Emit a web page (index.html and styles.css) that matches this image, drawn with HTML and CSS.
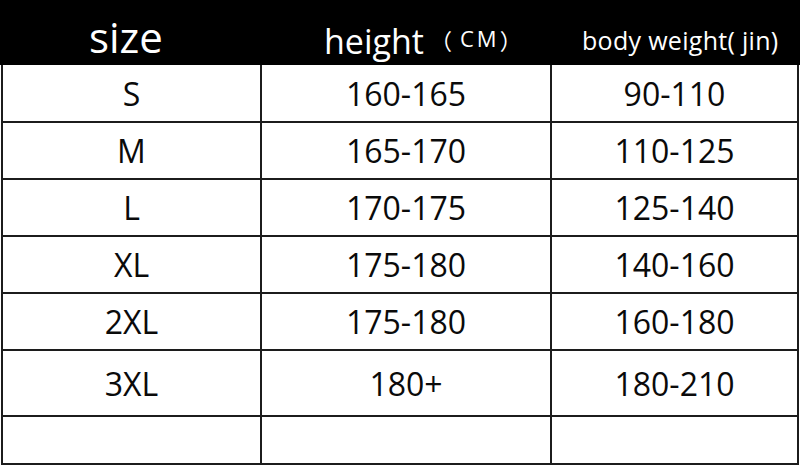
FILE: index.html
```html
<!DOCTYPE html>
<html lang="en">
<head>
<meta charset="utf-8">
<title>Size chart</title>
<link rel="stylesheet" href="styles.css">
</head>
<body>
<div class="chart">
  <div class="head">
    <div class="hcell h-size">size</div>
    <div class="hcell h-height">height<span class="unit"><span class="paren">（</span><span class="cm">CM</span><span class="paren">）</span></span></div>
    <div class="hcell h-weight">body weight( jin)</div>
  </div>
  <div class="row first"><div class="cell">S</div><div class="cell">160-165</div><div class="cell">90-110</div></div>
  <div class="row"><div class="cell">M</div><div class="cell">165-170</div><div class="cell">110-125</div></div>
  <div class="row"><div class="cell">L</div><div class="cell">170-175</div><div class="cell">125-140</div></div>
  <div class="row"><div class="cell">XL</div><div class="cell">175-180</div><div class="cell">140-160</div></div>
  <div class="row"><div class="cell">2XL</div><div class="cell">175-180</div><div class="cell">160-180</div></div>
  <div class="row tall"><div class="cell">3XL</div><div class="cell">180+</div><div class="cell">180-210</div></div>
  <div class="row empty"><div class="cell"></div><div class="cell"></div><div class="cell"></div></div>
</div>
</body>
</html>
```
FILE: styles.css
```css
html, body {
  margin: 0;
  padding: 0;
  background: #fff;
}
body {
  width: 800px;
  height: 466px;
  overflow: hidden;
  font-family: "Open Sans", "Noto Sans", "Noto Sans CJK SC", sans-serif;
  color: #000;
}
.chart {
  width: 800px;
}
.head {
  display: grid;
  grid-template-columns: 262px 290px 248px;
  height: 65px;
  background: #000;
  color: #fff;
}
.hcell {
  white-space: nowrap;
  box-sizing: border-box;
}
.h-size {
  font-size: 42px;
  line-height: 42px;
  padding-top: 16px;
  padding-left: 89px;
}
.h-height {
  font-size: 34px;
  line-height: 34px;
  padding-top: 23px;
  padding-left: 62px;
}
.unit {
  display: inline-block;
  vertical-align: 7px;
  line-height: 22px;
  margin-left: 6px;
}
.paren {
  font-family: "Noto Sans CJK SC", sans-serif;
  font-size: 22px;
  vertical-align: -2px;
}
.cm {
  font-family: "Open Sans", sans-serif;
  font-size: 22px;
  font-weight: 500;
  letter-spacing: 3px;
  margin-left: 8px;
}
.h-weight {
  font-size: 25px;
  line-height: 25px;
  padding-top: 28px;
  padding-left: 30px;
  letter-spacing: 0.3px;
}
.row {
  display: grid;
  grid-template-columns: 259px 290px 247px;
  width: 798px;
  margin-left: 1px;
  box-sizing: border-box;
  border-left: 2px solid #1c1c1c;
  height: 57px;
}
.row.first {
  height: 58px;
}
.row.tall {
  height: 66px;
}
.row.empty {
  height: 48px;
}
.cell {
  box-sizing: border-box;
  border-right: 2px solid #1c1c1c;
  border-bottom: 2px solid #1c1c1c;
  display: flex;
  align-items: center;
  justify-content: center;
  font-size: 32px;
  color: #0a0a0a;
}
```
